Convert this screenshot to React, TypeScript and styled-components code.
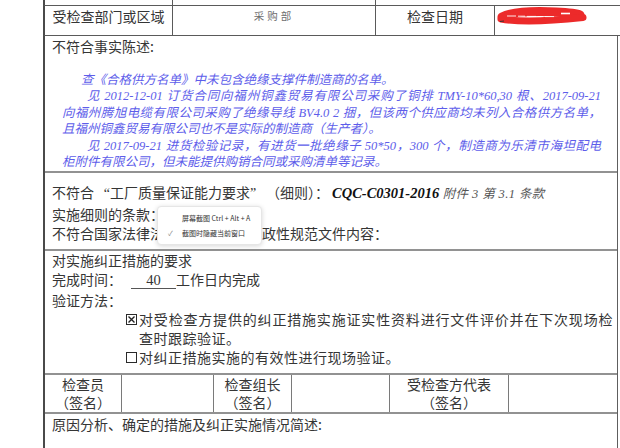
import React from "react";
import styled, { createGlobalStyle } from "styled-components";

const CJK = `"Noto Sans CJK SC", "Liberation Serif", sans-serif`;
const SERIF = `"Liberation Serif", "Noto Sans CJK SC", serif`;

const Global = createGlobalStyle`
  html, body { margin: 0; padding: 0; background: #fff; overflow: hidden; }
  body { width: 620px; height: 448px; }
`;

const Page = styled.div`
  position: relative;
  width: 620px;
  height: 448px;
  overflow: hidden;
  box-sizing: border-box;
  padding-left: 43px;
  font-family: ${CJK};
  font-size: 14px;
  color: #353535;
`;

const Sheet = styled.div`
  display: flex;
  flex-direction: column;
`;

const TopStrip = styled.div`
  display: grid;
  grid-template-columns: 128px 203px 1fr;
  width: 600px;
  height: 6px;
  box-sizing: border-box;
  border-left: 2px solid #4a4a4a;
  border-bottom: 1px solid #5a5a5a;
`;

const StripCell = styled.div<{ $edge?: boolean }>`
  border-right: ${(p) => (p.$edge ? "1px solid #5a5a5a" : "none")};
`;

const InfoRow = styled.div`
  display: grid;
  grid-template-columns: 128px 203px 119px 1fr;
  width: 600px;
  height: 30px;
  box-sizing: border-box;
  border-left: 2px solid #4a4a4a;
  border-bottom: 1px solid #5a5a5a;
`;

const InfoCell = styled.div<{ $last?: boolean; $start?: boolean }>`
  display: flex;
  justify-content: ${(p) => (p.$start ? "flex-start" : "center")};
  align-items: flex-start;
  line-height: 20px;
  border-right: ${(p) => (p.$last ? "none" : "1px solid #5a5a5a")};
  padding-left: ${(p) => (p.$start ? "1px" : "0")};
`;

const DeptValue = styled.span`
  font-size: 10.5px;
  letter-spacing: 3px;
  color: #6e6e6e;
  line-height: 20px;
`;

const ScribbleSvg = styled.svg`
  display: block;
  margin-top: -1px;
`;

const Body = styled.div`
  width: 575px;
  box-sizing: border-box;
  border-left: 2px solid #4a4a4a;
  border-right: 1.5px solid #5e5e5e;
`;

const Section = styled.div<{ $h: number; $pt?: number }>`
  height: ${(p) => p.$h}px;
  box-sizing: border-box;
  padding: ${(p) => p.$pt ?? 0}px 4px 0 7px;
  border-bottom: 2px solid #929292;
  overflow: hidden;
`;

const Line = styled.div<{ $lh?: number }>`
  line-height: ${(p) => p.$lh ?? 20}px;
`;

const Narrative = styled.div`
  margin: 16px 12px 0 10px;
  font-family: ${SERIF};
  font-style: italic;
  font-size: 12.5px;
  line-height: 16.4px;
  color: #5d5dea;
`;

const NLine = styled.div<{ $indent?: number; $full?: boolean }>`
  padding-left: ${(p) => p.$indent ?? 0}px;
  text-align: ${(p) => (p.$full ? "justify" : "left")};
  text-align-last: ${(p) => (p.$full ? "justify" : "auto")};
`;

const Quote = styled.span<{ $open?: boolean }>`
  display: inline-block;
  width: 16px;
  text-align: ${(p) => (p.$open ? "right" : "left")};
  font-family: ${SERIF};
`;

const Code = styled.span`
  font-family: ${SERIF};
  font-weight: bold;
  font-style: italic;
  font-size: 14.5px;
  color: #111;
  margin-left: 3px;
`;

const Annex = styled.span`
  font-family: ${SERIF};
  font-style: italic;
  font-size: 12.5px;
  letter-spacing: 0.4px;
  color: #555;
`;

const Blank = styled.span`
  display: inline-block;
  width: 45px;
  margin-left: 9px;
  text-align: center;
  font-family: ${SERIF};
  font-size: 14.5px;
  line-height: 16px;
  border-bottom: 1px solid #555;
`;

const CheckItem = styled.div`
  display: flex;
  margin-left: 74px;
  line-height: 19px;
`;

const Box = styled.span`
  flex: none;
  width: 11px;
  height: 11px;
  margin-top: 4px;
  margin-right: 2px;
  box-sizing: border-box;
  border: 1.3px solid #2a2a2a;
  display: flex;
  align-items: center;
  justify-content: center;
`;

const CheckText = styled.div`
  flex: 1;
  text-align: justify;
  letter-spacing: 0.5px;
`;

const SignRow = styled.div`
  display: grid;
  grid-template-columns: 77px 92px 78px 98px 119px 1fr;
  height: 39px;
  box-sizing: border-box;
  border-bottom: 2px solid #929292;
`;

const SignCell = styled.div<{ $last?: boolean }>`
  display: flex;
  flex-direction: column;
  align-items: center;
  line-height: 18px;
  border-right: ${(p) => (p.$last ? "none" : "1px solid #7a7a7a")};
`;

const Popup = styled.div`
  position: absolute;
  left: 157px;
  top: 206px;
  width: 105px;
  height: 39px;
  box-sizing: border-box;
  background: #fff;
  border: 1px solid #e6e6e6;
  border-radius: 4px;
  box-shadow: 0 1px 5px rgba(0, 0, 0, 0.16);
  display: flex;
  flex-direction: column;
  justify-content: center;
  gap: 7px;
  padding-left: 10px;
  font-family: "Noto Sans CJK SC", "Inter", sans-serif;
  font-size: 7px;
  color: #333;
  z-index: 5;
`;

const PopRow = styled.div`
  display: flex;
  align-items: center;
  height: 8px;
  line-height: 8px;
  white-space: nowrap;
`;

const Tick = styled.span`
  flex: none;
  width: 14px;
  font-size: 7px;
  color: #8a8a8a;
`;

const Scribble = () => (
  <ScribbleSvg width="92" height="20" viewBox="0 0 92 20" aria-hidden="true">
    <path d="M6 12 C 18 6, 40 6, 60 7 C 72 7.5, 80 8, 84 10" stroke="#ec2a2a" strokeWidth="9" strokeLinecap="round" fill="none" />
    <path d="M5 14 C 25 17.5, 55 16, 87 12.5" stroke="#ec2a2a" strokeWidth="7" strokeLinecap="round" fill="none" />
    <path d="M11 11h9M22 11.2h7M31 11.4h9M42 11.5h5M49 11.6h9" stroke="#fff" strokeWidth="1" opacity="0.9" />
    <path d="M65 8.5h9" stroke="#fff" strokeWidth="1.6" />
    <path d="M4 16.5l4 -0.5" stroke="#333" strokeWidth="1.2" />
  </ScribbleSvg>
);

const XMark = () => (
  <svg width="7" height="7" viewBox="0 0 7 7" aria-hidden="true">
    <path d="M0.5 0.5 L6.5 6.5 M6.5 0.5 L0.5 6.5" stroke="#222" strokeWidth="1.4" />
  </svg>
);

export default function App() {
  return (
    <>
      <Global />
      <Page>
        <Sheet>
          <TopStrip>
            <StripCell $edge />
            <StripCell $edge />
            <StripCell />
          </TopStrip>
          <InfoRow>
            <InfoCell>受检查部门或区域</InfoCell>
            <InfoCell>
              <DeptValue>采购部</DeptValue>
            </InfoCell>
            <InfoCell>检查日期</InfoCell>
            <InfoCell $last $start>
              <Scribble />
            </InfoCell>
          </InfoRow>
          <Body>
            <Section $h={137}>
              <Line>不符合事实陈述:</Line>
              <Narrative>
                <NLine $indent={19}>查《合格供方名单》中未包含绝缘支撑件制造商的名单。</NLine>
                <NLine $indent={25} $full>
                  见 2012-12-01 订货合同向福州铜鑫贸易有限公司采购了铜排 TMY-10*60,30 根、2017-09-21
                </NLine>
                <NLine $full>向福州腾旭电缆有限公司采购了绝缘导线 BV4.0 2 捆，但该两个供应商均未列入合格供方名单，</NLine>
                <NLine>且福州铜鑫贸易有限公司也不是实际的制造商（生产者）。</NLine>
                <NLine $indent={25} $full>
                  见 2017-09-21 进货检验记录，有进货一批绝缘子 50*50，300 个，制造商为乐清市海坦配电
                </NLine>
                <NLine>柜附件有限公司，但未能提供购销合同或采购清单等记录。</NLine>
              </Narrative>
            </Section>
            <Section $h={78} $pt={10}>
              <Line $lh={19.5}>
                不符合<Quote $open>“</Quote>工厂质量保证能力要求<Quote>”</Quote>（细则）：<Code>CQC-C0301-2016</Code>
                <Annex> 附件 3 第 3.1 条款</Annex>
              </Line>
              <Line $lh={19.5}>实施细则的条款：</Line>
              <Line $lh={19.5}>不符合国家法律法规、标准或者行政性规范文件内容：</Line>
            </Section>
            <Section $h={124}>
              <Line $lh={18}>对实施纠正措施的要求</Line>
              <Line $lh={21}>
                完成时间：<Blank>40</Blank>工作日内完成
              </Line>
              <Line $lh={20}>验证方法：</Line>
              <CheckItem>
                <Box>
                  <XMark />
                </Box>
                <CheckText>对受检查方提供的纠正措施实施证实性资料进行文件评价并在下次现场检查时跟踪验证。</CheckText>
              </CheckItem>
              <CheckItem>
                <Box />
                <CheckText>对纠正措施实施的有效性进行现场验证。</CheckText>
              </CheckItem>
            </Section>
            <SignRow>
              <SignCell>
                <span>检查员</span>
                <span>（签名）</span>
              </SignCell>
              <SignCell />
              <SignCell>
                <span>检查组长</span>
                <span>（签名）</span>
              </SignCell>
              <SignCell />
              <SignCell>
                <span>受检查方代表</span>
                <span>（签名）</span>
              </SignCell>
              <SignCell $last />
            </SignRow>
            <Section $h={60}>
              <Line>原因分析、确定的措施及纠正实施情况简述:</Line>
            </Section>
          </Body>
        </Sheet>
        <Popup>
          <PopRow>
            <Tick />
            <span>屏幕截图 Ctrl + Alt + A</span>
          </PopRow>
          <PopRow>
            <Tick>✓</Tick>
            <span>截图时隐藏当前窗口</span>
          </PopRow>
        </Popup>
      </Page>
    </>
  );
}
